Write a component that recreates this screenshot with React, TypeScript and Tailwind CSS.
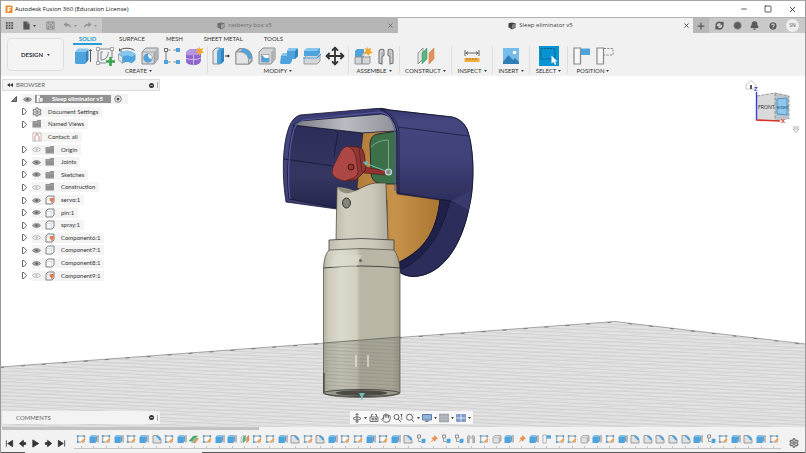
import React from 'react';
import { Bell, Clock, CircleHelp, Hand, Minus, Move, Plus, RefreshCw, Settings, Square, X } from 'lucide-react';

type IconProps = { className?: string };

const BLUE = '#4ea3dc';
const BLUE_DARK = '#3583bd';
const GREY = '#8a8d90';

const Svg: React.FC<IconProps & { children: React.ReactNode }> = ({ className = 'size-5', children }) => (
  <svg viewBox="0 0 20 20" className={`${className} shrink-0`} fill="none" aria-hidden="true">{children}</svg>
);

/* ---------- Ribbon icons ---------- */

const ExtrudeIcon: React.FC<IconProps> = ({ className }) => (
  <Svg className={className}>
    <path d="M2 6 5 2.500H15.500L13 6Z" fill="#86c5ee" />
    <path d="M2 6H13V17L12 18H3L2 17Z" fill={BLUE} />
    <path d="M13 6 15.500 3V14L13 17Z" fill={BLUE_DARK} />
    <path d="M17.500 4V16M16.300 5 17.500 3.500 18.700 5" stroke="#555" strokeWidth="1" />
  </Svg>
);

const SketchPlusIcon: React.FC<IconProps> = ({ className }) => (
  <Svg className={className}>
    <path d="M3 3H17V12M11 17H3V3" stroke={GREY} strokeWidth="1.200" />
    <path d="M6 14V6H8M6 14C11 14 13 11 13.500 6" stroke={GREY} strokeWidth="1.100" />
    <path d="M1.500 1.500h3v3h-3zM15.500 1.500h3v3h-3zM1.500 15.500h3v3h-3z" fill="#fff" stroke={GREY} strokeWidth=".8" />
    <path d="M15.500 11V20M11 15.500H20" stroke="#35a34a" strokeWidth="2.600" />
  </Svg>
);

const RevolveIcon: React.FC<IconProps> = ({ className }) => (
  <Svg className={className}>
    <path d="M1.500 8C6 3.500 14 3.500 18.500 8V14L14.500 17.500C12 15.500 8 15.500 5.500 17.500L1.500 14Z" fill={BLUE} />
    <path d="M1.500 8C6 3.500 14 3.500 18.500 8L15 11C12 9 8 9 5.500 11Z" fill="#86c5ee" />
    <path d="M1.500 8 5.500 11V17.500L1.500 14Z" fill="#dfe2e4" stroke={GREY} strokeWidth=".6" />
    <path d="M2 4.500C6 1.500 14 1.500 17.500 4.500M2.500 2.500V5H5" stroke="#555" strokeWidth="1" />
  </Svg>
);

const HoleIcon: React.FC<IconProps> = ({ className }) => (
  <Svg className={className}>
    <path d="M2 6 6 2H18V13L14 18H2Z" fill="#d4d7d9" stroke={GREY} />
    <path d="M14 6 18 2V13L14 18Z" fill="#aeb2b5" />
    <path d="M2 6H14V18" stroke={GREY} strokeWidth=".6" />
    <circle cx="8" cy="12" r="4.200" fill="#fff" stroke={GREY} strokeWidth=".8" />
    <path d="M8 7.800A4.200 4.200 0 1 0 12 13C9 13 8 11 8 7.800Z" fill={BLUE} />
  </Svg>
);

const PatternIcon: React.FC<IconProps> = ({ className }) => (
  <Svg className={className}>
    <path d="M6 4H8.500M11.500 4H14M6 16H8.500M11.500 16H14M4 6V14" stroke={GREY} strokeWidth="1.200" />
    <path d="M2.500 2.500h3v3h-3z" fill="#fff" stroke="#666" />
    <path d="M14 2h4v4h-4zM2 14h4v4H2zM14 14h4v4h-4z" fill={BLUE} />
  </Svg>
);

const FormIcon: React.FC<IconProps> = ({ className }) => (
  <Svg className={className}>
    <path d="M2 8C2 5 5 3 9 3S17 5 17 7V14C17 17 14 19 10 19S2 18 2 15Z" fill="#9066cd" />
    <path d="M2 8C2 5 5 3 9 3S17 5 17 7 14 9 10 9 2 10 2 8Z" fill="#b595e2" />
    <path d="M2 12.500C6 14 13 14 17 12M9.500 9V19" stroke="#e0d0f4" strokeWidth=".8" />
    <path d="M15 0 16 3 19 2 18 5 20 7 17 7 15.500 10 14.500 7 11.500 6.500 13.500 4.500 12.500 2 15 3Z" fill="#f0a72c" />
  </Svg>
);

const PressPullIcon: React.FC<IconProps> = ({ className }) => (
  <Svg className={className}>
    <path d="M2 5 5 2H9V18H2Z" fill="#e4e6e8" stroke={GREY} />
    <path d="M6 5 9 2H13V15L10 18H6Z" fill={BLUE} />
    <path d="M10 5 13 2V15L10 18Z" fill={BLUE_DARK} />
    <path d="M14 10H18M16.800 8.800 18 10 16.800 11.200" stroke="#333" strokeWidth="1.200" />
  </Svg>
);

const FilletIcon: React.FC<IconProps> = ({ className }) => (
  <Svg className={className}>
    <path d="M2 6 5.500 2.500H8C14 2.500 18 7 18 13V15L15 18H2Z" fill="#c3c7ca" stroke={GREY} strokeWidth="1.200" />
    <path d="M8.500 2.500C14 2.500 18 7 18 12.500L14.500 13C14 9 10.500 6 6 6Z" fill={BLUE} />
    <path d="M2 6H6C11 6 14.500 10 14.500 14V18H2Z" fill="#e2e4e6" stroke={GREY} strokeWidth=".8" />
  </Svg>
);

const ShellIcon: React.FC<IconProps> = ({ className }) => (
  <Svg className={className}>
    <path d="M2 6 6 2H18V13L14 18H2Z" fill="#d4d7d9" stroke={GREY} />
    <path d="M14 6 18 2V13L14 18Z" fill="#aeb2b5" />
    <path d="M4.500 8.500H12V16H4.500Z" fill="#fff" stroke={GREY} strokeWidth=".7" />
    <path d="M4.500 8.500 8 12V16H4.500ZM8 12H12V16H8Z" fill={BLUE} />
  </Svg>
);

const CombineIcon: React.FC<IconProps> = ({ className }) => (
  <Svg className={className}>
    <path d="M2 10 4 7H8V5L10 2H18L19 3V10L16 13H13V15L11 18H2L1 17Z" fill={BLUE} />
    <path d="M8 5 10 2H18L16 5ZM2 10 4 7H8V10Z" fill="#86c5ee" />
    <path d="M16 5 19 3V10L16 13Z" fill={BLUE_DARK} />
  </Svg>
);

const SplitIcon: React.FC<IconProps> = ({ className }) => (
  <Svg className={className}>
    <path d="M2 12 5 9H18V15L15 18H2Z" fill="#d4d7d9" stroke={GREY} strokeWidth=".8" />
    <path d="M2 5 5 2H18V7L15 10H2Z" fill={BLUE} />
    <path d="M2 5 5 2H18L15 5Z" fill="#86c5ee" />
    <path d="M1 12H15L19 8" stroke={BLUE} strokeWidth="1.200" />
  </Svg>
);

const MoveIcon: React.FC<IconProps> = ({ className = 'size-5' }) => (
  <Move className={`${className} text-[#333]`} strokeWidth={2.2} />
);

const NewComponentIcon: React.FC<IconProps> = ({ className }) => (
  <Svg className={className}>
    <path d="M2 5 4 3H11V11H2Z" fill={BLUE} />
    <path d="M2 11H9V18H2ZM9 11H16L17 10V17L16 18H9ZM9 11V7H15" fill="#d4d7d9" stroke={GREY} strokeWidth=".9" />
    <path d="M14 0 15 3 18 2 17.500 5 20 7 17 7.500 15 10 14 7.500 11 7 13 4.500 11.500 2 14 3Z" fill="#f0a72c" />
  </Svg>
);

const JointIcon: React.FC<IconProps> = ({ className }) => (
  <Svg className={className}>
    <path d="M3 17V6C3 3 8 2 8 5V9L6 11V18ZM17 17V6C17 3 12 2 12 5V9L14 11V18Z" fill="#cfd2d4" stroke="#777" strokeWidth="1.100" />
    <path d="M6 17V6M14 17V6" stroke="#999" strokeWidth=".7" />
  </Svg>
);

const PlaneIcon: React.FC<IconProps> = ({ className }) => (
  <Svg className={className}>
    <path d="M2 7 7 2V13L2 18Z" fill="#e3e5e6" stroke={GREY} strokeWidth=".9" />
    <path d="M6 7 11 2V13L6 18Z" fill="#58b57c" stroke="#3c9560" strokeWidth=".5" />
    <path d="M13 7 18 2V13L13 18Z" fill="#e6915d" stroke="#c97845" strokeWidth=".5" />
  </Svg>
);

const MeasureIcon: React.FC<IconProps> = ({ className }) => (
  <Svg className={className}>
    <path d="M3 4V10M17 4V10M3.500 7H16.500M6 5.500 4 7 6 8.500M14 5.500 16 7 14 8.500" stroke="#666" strokeWidth="1" />
    <path d="M2.500 12H17.500V16H2.500Z" fill="#f0ad3c" />
    <path d="M5 12V14M8 12V14M11 12V14M14 12V14" stroke="#9c681a" strokeWidth=".8" />
  </Svg>
);

const ImageIcon: React.FC<IconProps> = ({ className }) => (
  <Svg className={className}>
    <path d="M2 2H18V18H2Z" fill="#77bde9" />
    <path d="M2 16 7.500 9 12 14 14 12 18 16V18H2Z" fill="#2f7db5" />
    <circle cx="13.500" cy="6.500" r="1.800" fill="#fff" />
  </Svg>
);

const SelectIcon: React.FC<IconProps> = ({ className }) => (
  <Svg className={className}>
    <path d="M0 0H20V20H0Z" fill="#0894d3" />
    <path d="M2 2.500H16V13H2Z" stroke="#0d5b7d" strokeWidth="1" strokeDasharray="2 1" />
    <path d="M12.500 9.500V17.500L14.500 16 16 19 17.300 18.300 16 15.500H18.500Z" fill="#fff" />
  </Svg>
);

const CaptureIcon: React.FC<IconProps> = ({ className }) => (
  <Svg className={className}>
    <path d="M2 2H8.500V18H2Z" fill="#f7f7f7" stroke="#888" strokeWidth="1.200" />
    <path d="M9 2.500H18V9H9Z" fill={BLUE} />
  </Svg>
);

const RevertIcon: React.FC<IconProps> = ({ className }) => (
  <Svg className={className}>
    <path d="M2 2H8.500V18H2Z" fill="#f7f7f7" stroke="#888" strokeWidth="1.200" />
    <path d="M9 2.500H18V9H9" stroke="#888" strokeWidth="1" strokeDasharray="2 1.300" />
  </Svg>
);

/* ---------- Timeline icons ---------- */

const SmallExtrudeIcon: React.FC<IconProps> = ({ className }) => (
  <Svg className={className}>
    <path d="M1 6 4 2H15L13 6Z" fill="#7fbfea" />
    <path d="M1 6H13V18H1Z" fill={BLUE} />
    <path d="M13 6 15.500 3V14L13 18Z" fill={BLUE_DARK} />
    <path d="M18 2V17" stroke="#777" strokeWidth="1.800" />
  </Svg>
);

const SketchIcon: React.FC<IconProps> = ({ className }) => (
  <Svg className={className}>
    <path d="M3.500 4H16.500V16H3.500Z" fill="#fafafa" stroke="#7d8184" strokeWidth="1.700" />
    <path d="M1.500 2h4v4h-4zM14.500 2h4v4h-4zM1.500 14h4v4h-4z" fill="#6ba9d6" />
    <path d="M9 18 10.500 14 16.500 8 19.500 11 13 17Z" fill="#f0a04b" stroke="#fff" strokeWidth=".6" />
  </Svg>
);

const SmallFilletIcon: React.FC<IconProps> = ({ className }) => (
  <Svg className={className}>
    <path d="M2 3H8C14 3 18 8 18 13V18H2Z" fill="#dfe1e3" stroke="#85898c" strokeWidth="1.600" />
    <path d="M8.500 3C14 3 18 8 18 13L14 12C13 9 11 7 8.500 6Z" fill={BLUE} />
  </Svg>
);

const OffsetPlaneIcon: React.FC<IconProps> = ({ className }) => (
  <Svg className={className}>
    <path d="M6 18 13 8H20L13 18Z" fill="#e6915d" />
    <path d="M0 14 9 4H17L8 14Z" fill="#4aa869" stroke="#2f8a4e" strokeWidth=".8" />
    <path d="M3 17 12 7H17L8 17Z" fill="#7fca96" />
  </Svg>
);

const CopyIcon: React.FC<IconProps> = ({ className }) => (
  <Svg className={className}>
    <path d="M3 2H9V8H3Z" fill="#eee" stroke="#777" strokeWidth="1.600" />
    <path d="M5 9V15H10" stroke="#888" strokeWidth="1.600" />
    <path d="M11 11 13 9.500H19V16L17.500 18H11Z" fill={BLUE} />
  </Svg>
);

const PinIcon: React.FC<IconProps> = ({ className }) => (
  <Svg className={className}>
    <path d="M11 2 18 9 15 10 12 15 9 12.500 2 18 7.500 11 5 8 10 6Z" fill="#ec9350" />
  </Svg>
);

const BoxIcon: React.FC<IconProps> = ({ className }) => (
  <Svg className={className}>
    <path d="M2 7 6 3H18V13L14 18H3L2 17Z" fill="#e2e2e2" stroke="#888" strokeWidth="1.300" />
    <path d="M14 7 18 3V13L14 18Z" fill="#b4b4b4" />
    <path d="M2 7H14V18" stroke="#aaa" />
  </Svg>
);

/* ---------- Browser icons ---------- */

const EyeIcon: React.FC<{ hidden?: boolean }> = ({ hidden }) => (
  <Svg className="size-[9px]">
    <path d="M1 10C4 4.500 16 4.500 19 10 16 15.500 4 15.500 1 10Z" fill={hidden ? '#f8f8f8' : '#a9a9a9'} stroke={hidden ? '#a8a8a8' : '#777'} strokeWidth="1.800" />
    <circle cx="10" cy="10" r="3" fill={hidden ? '#c6c6c6' : '#666'} />
  </Svg>
);

const FolderIcon = () => (
  <Svg className="size-[10px]">
    <path d="M1 4H9L11 2H18V17H1Z" fill="#919191" />
    <path d="M1 6.500H18" stroke="#b8b8b8" />
  </Svg>
);

const ComponentIcon: React.FC<{ pinned?: boolean }> = ({ pinned }) => (
  <Svg className="size-[10px]">
    <path d="M2 6 6 2H18V14L14 18H2Z" fill="#f5f6f8" stroke="#777" strokeWidth="1.800" />
    <path d="M13 7H3M13 7V17M13 7 17 3" stroke="#c2c6ca" />
    {pinned && <path d="M10 6H18V10L16 12 14 19 12 13 9 11Z" fill="#e08052" />}
  </Svg>
);

const ContactIcon = () => (
  <Svg className="size-[10px]">
    <path d="M2 2H18V18H2Z" fill="#fff" stroke="#999" strokeWidth="1.200" />
    <path d="M6 17V9L8.500 6V3M14 17V9L11.500 6V3" stroke="#cf6464" strokeWidth="1.600" />
  </Svg>
);

const Caret: React.FC<IconProps> = ({ className = 'text-[#444]' }) => (
  <svg viewBox="0 0 6 4" className={`${className} h-[2px] w-[3px] shrink-0`} aria-hidden="true">
    <path d="M0 0H6L3 4Z" fill="currentColor" />
  </svg>
);

const RIBBON_TABS = ['SURFACE', 'MESH', 'SHEET METAL', 'TOOLS'];

const RIBBON_GROUPS: { label: string; width: string; icons: React.FC<IconProps>[] }[] = [
  { label: 'CREATE', width: 'w-[138px]', icons: [ExtrudeIcon, SketchPlusIcon, RevolveIcon, HoleIcon, PatternIcon, FormIcon] },
  { label: 'MODIFY', width: 'w-[141px]', icons: [PressPullIcon, FilletIcon, ShellIcon, CombineIcon, SplitIcon, MoveIcon] },
  { label: 'ASSEMBLE', width: 'w-[51px]', icons: [NewComponentIcon, JointIcon] },
  { label: 'CONSTRUCT', width: 'w-[52px]', icons: [PlaneIcon] },
  { label: 'INSPECT', width: 'w-[41px]', icons: [MeasureIcon] },
  { label: 'INSERT', width: 'w-[37px]', icons: [ImageIcon] },
  { label: 'SELECT', width: 'w-[38px]', icons: [SelectIcon] },
  { label: 'POSITION', width: 'w-[50px]', icons: [CaptureIcon, RevertIcon] },
];

type TreeRow = { label: string; icon: 'gear' | 'folder' | 'contact' | 'body' | 'pinned'; eye?: 'on' | 'off' };

const TREE: TreeRow[] = [
  { label: 'Document Settings', icon: 'gear' },
  { label: 'Named Views', icon: 'folder' },
  { label: 'Contact: all', icon: 'contact' },
  { label: 'Origin', icon: 'folder', eye: 'off' },
  { label: 'Joints', icon: 'folder', eye: 'on' },
  { label: 'Sketches', icon: 'folder', eye: 'on' },
  { label: 'Construction', icon: 'folder', eye: 'off' },
  { label: 'servo:1', icon: 'pinned', eye: 'on' },
  { label: 'pin:1', icon: 'body', eye: 'on' },
  { label: 'spray:1', icon: 'body', eye: 'on' },
  { label: 'Component6:1', icon: 'pinned', eye: 'off' },
  { label: 'Component7:1', icon: 'body', eye: 'on' },
  { label: 'Component8:1', icon: 'body', eye: 'on' },
  { label: 'Component9:1', icon: 'pinned', eye: 'off' },
];

// s sketch, e extrude, f fillet, o offset plane, m midplane, c copy, p pin, j joint, b body, k capture position
const FEATURES = 'sesesefseoseemssefsfessesefcpccjsbepekssbesefffffecsefes';

const FEATURE_ICONS: Record<string, [React.FC<IconProps>, string]> = {
  s: [SketchIcon, 'Sketch'],
  e: [SmallExtrudeIcon, 'Extrude'],
  f: [SmallFilletIcon, 'Fillet'],
  o: [OffsetPlaneIcon, 'Offset plane'],
  m: [PlaneIcon, 'Midplane'],
  c: [CopyIcon, 'Copy'],
  p: [PinIcon, 'Pin'],
  j: [JointIcon, 'Joint'],
  b: [BoxIcon, 'Body'],
  k: [CaptureIcon, 'Position'],
};

const TitleBar = () => (
  <header className="flex h-[17px] items-center border-t border-[#a6a6a6] bg-white pl-1 text-[#111]">
    <svg viewBox="0 0 16 18" className="mr-[2px] h-[9px] w-2" aria-hidden="true">
      <path d="M1 1H13L15 3V16H1Z" fill="#f08a2c" />
      <path d="M5 4H12V6.500H8V8.500H11V11H8V14H5Z" fill="#fff" />
    </svg>
    <h1 className="flex-1 whitespace-nowrap font-['Open_Sans',sans-serif] text-[6px]">Autodesk Fusion 360 (Education License)</h1>
    <div className="flex items-center gap-4 pr-2">
      <button aria-label="Minimize"><Minus size={8} strokeWidth={2} /></button>
      <button aria-label="Maximize"><Square size={8} strokeWidth={2} /></button>
      <button aria-label="Close"><X size={9} strokeWidth={2} /></button>
    </div>
  </header>
);

const TabCube: React.FC<IconProps> = ({ className }) => (
  <svg viewBox="0 0 18 18" className={`${className} size-2 shrink-0`} aria-hidden="true">
    <path d="M1 3 8 1 17 3V13L9 17 1 12Z" fill="currentColor" />
    <path d="M9 6 16 4V12L9 16Z" fill="#fff" opacity=".35" />
  </svg>
);

const DocumentBar = () => (
  <div className="flex h-4 items-stretch border-t border-[#b2b2b2] bg-[#c9c9c9] font-['Open_Sans',sans-serif] text-[6px] text-[#444]">
    <div className="flex w-[101px] shrink-0 items-center pl-1 text-[#555]">
      <button aria-label="Data panel" className="mr-2">
        <Svg className="size-[9px]"><path d="M2 2h4v4H2zM8 2h4v4H8zM14 2h4v4h-4zM2 8h4v4H2zM8 8h4v4H8zM14 8h4v4h-4zM2 14h4v4H2zM8 14h4v4H8zM14 14h4v4h-4z" fill="currentColor" /></Svg>
      </button>
      <button aria-label="File" className="mr-[10px] flex items-center gap-[2px]">
        <Svg className="size-[9px]"><path d="M3 1H12L17 6V19H3Z" fill="#555" /><path d="M12 1V6H17" stroke="#ccc" /></Svg>
        <Caret />
      </button>
      <button aria-label="Save" className="mr-2">
        <Svg className="size-[9px]"><path d="M2 2H18V18H2ZM6 2V7H14V2M5 18V11H15V18M7 14H13" stroke="#858585" strokeWidth="2" /></Svg>
      </button>
      <button aria-label="Undo" className="mr-[6px] flex items-center gap-[2px] text-[#929292]">
        <Svg className="size-[9px]"><path d="M1 8 8 2V6C14 6 18 9 18 16 15 12 12 10 8 10V14Z" fill="currentColor" /></Svg>
        <Caret className="text-[#929292]" />
      </button>
      <button aria-label="Redo" className="flex items-center gap-[2px] text-[#929292]">
        <Svg className="size-[9px]"><path d="M19 8 12 2V6C6 6 2 9 2 16 5 12 8 10 12 10V14Z" fill="currentColor" /></Svg>
        <Caret className="text-[#929292]" />
      </button>
    </div>
    <div className="flex flex-1 items-center bg-[#b6b6b6] pr-1 text-[#6d6d6d]">
      <button className="flex flex-1 items-center justify-center gap-[3px] whitespace-nowrap"><TabCube />rasberry box v3</button>
      <button aria-label="Close rasberry box v3"><X size={7} strokeWidth={3} /></button>
    </div>
    <div className="flex flex-1 items-center bg-[#f1f1f1] pr-[3px]">
      <button className="flex flex-1 items-center justify-center gap-[3px] whitespace-nowrap"><TabCube />Sleep eliminator v5</button>
      <button aria-label="Close Sleep eliminator v5"><X size={7} strokeWidth={3} /></button>
    </div>
    <div className="flex w-28 shrink-0 items-center text-[#5a5a5a]">
      <button aria-label="New tab" className="flex h-full w-4 items-center justify-center bg-[#b8b8b8]"><Plus size={10} strokeWidth={3} /></button>
      <div className="flex flex-1 items-center justify-between pl-[6px] pr-[6px]">
        <button aria-label="Extensions"><RefreshCw size={9} strokeWidth={4} /></button>
        <button aria-label="Job status"><Clock size={9} fill="#5a5a5a" stroke="#9a9a9a" strokeWidth={2} /></button>
        <button aria-label="Notifications"><Bell size={9} fill="#5a5a5a" strokeWidth={3} /></button>
        <button aria-label="Help"><CircleHelp size={10} fill="#5a5a5a" stroke="#dadada" strokeWidth={2.5} /></button>
        <button className="flex size-[13px] items-center justify-center rounded-full bg-[#eeeeee] text-[5px]">SN</button>
      </div>
    </div>
  </div>
);

const Ribbon = () => (
  <div className="flex h-[43px] bg-[#f1f1f1] pl-[6px] font-[Lato,sans-serif] text-[6px] leading-[7px] text-[#333]">
    <button className="my-[5px] flex w-[57px] shrink-0 items-center justify-center gap-1 rounded-sm border border-[#dedede] bg-[#f4f4f4] font-bold">
      DESIGN <Caret />
    </button>
    <div className="flex flex-col pl-[6px]">
      <nav className="flex h-3 items-end gap-[21px] pl-[3px]">
        <button className="-mr-1 w-[29px] border-b-2 border-[#2a9bd6] pb-px font-bold text-[#2a9bd6]">SOLID</button>
        {RIBBON_TABS.map(tab => (
          <button key={tab} className="whitespace-nowrap pb-[3px]">{tab}</button>
        ))}
      </nav>
      <div className="flex h-[29px] pt-px">
        {RIBBON_GROUPS.map(group => (
          <div key={group.label} className={`${group.width} flex shrink-0 flex-col justify-between border-r border-[#dedede] px-[2px] last:border-0`}>
            <div className="flex h-5 items-center justify-around">
              {group.icons.map((Icon, i) => (
                <button key={i} aria-label={`${group.label} tool ${i + 1}`}><Icon className="size-5" /></button>
              ))}
            </div>
            <button className="flex items-center justify-center gap-[2px] whitespace-nowrap">
              {group.label}<Caret />
            </button>
          </div>
        ))}
      </div>
    </div>
  </div>
);

const PanelDot = () => (
  <svg viewBox="0 0 12 12" className="size-[5px]" aria-hidden="true">
    <circle cx="6" cy="6" r="6" fill="#333" />
    <path d="M3 6H9" stroke="#fff" strokeWidth="1.500" />
  </svg>
);

const RowIcon: React.FC<{ icon: TreeRow['icon'] }> = ({ icon }) => {
  if (icon === 'gear') return <Settings size={10} strokeWidth={3} className="text-[#858585]" />;
  if (icon === 'folder') return <FolderIcon />;
  if (icon === 'contact') return <ContactIcon />;
  return <ComponentIcon pinned={icon === 'pinned'} />;
};

const BrowserPanel = () => (
  <section className="w-[158px] font-[Lato,sans-serif] text-[6px] leading-[8px] text-[#333]">
    <div className="mt-[3px] flex h-3 items-center border border-[#dcdcdc] bg-[#f3f3f3] pl-1 pr-px text-[#666]">
      <button aria-label="Collapse browser">
        <svg viewBox="0 0 12 8" className="h-1 w-[6px]"><path d="M6 0V8L0 4ZM12 0V8L6 4Z" fill="#333" /></svg>
      </button>
      <h2 className="flex-1 pl-[3px]">BROWSER</h2>
      <PanelDot />
      <span className="ml-[3px] h-[6px] w-px bg-[#aaa]" />
    </div>
    <div className="mt-[2px] flex h-[189px] flex-col items-start">
      <div className="flex flex-1 items-center pl-[9px]">
        <svg viewBox="0 0 12 12" className="mr-1 size-[6px]" aria-hidden="true"><path d="M11 1V11H1Z" fill="#888" stroke="#333" strokeWidth="1.500" /></svg>
        <div className="flex h-[10px] items-center gap-[3px] bg-[#f3f3f3] pl-[2px] pr-[6px]">
          <EyeIcon />
          <button className="flex h-2 items-center gap-2 whitespace-nowrap bg-[#929292] pl-px pr-2 font-bold text-white">
            <Svg className="size-2"><path d="M2 1H10V18H2Z" fill="#fff" /><path d="M8 9 11 6H18V15L16 18H8Z" fill="#eee" stroke="#666" strokeWidth="1.500" /></Svg>
            Sleep eliminator v5
          </button>
          <svg viewBox="0 0 16 16" className="size-2" aria-hidden="true">
            <circle cx="8" cy="8" r="6.500" fill="#fff" stroke="#555" strokeWidth="1.500" />
            <circle cx="8" cy="8" r="3" fill="#444" />
          </svg>
        </div>
      </div>
      {TREE.map(row => (
        <div key={row.label} className="flex flex-1 items-center pl-5">
          <span className="w-[10px]">
            {row.icon !== 'contact' && (
              <svg viewBox="0 0 10 14" className="h-[7px] w-[5px]" aria-hidden="true"><path d="M1 1H4L9 7 4 13H1Z" fill="#fff" stroke="#555" strokeWidth="1.800" /></svg>
            )}
          </span>
          <button className="flex h-[10px] items-center whitespace-nowrap bg-[#f4f4f4] pr-1">
            {row.eye && <span className="w-[13px]"><EyeIcon hidden={row.eye === 'off'} /></span>}
            <span className="w-4"><RowIcon icon={row.icon} /></span>
            {row.label}
          </button>
        </div>
      ))}
    </div>
  </section>
);

const ViewCube = () => (
  <svg viewBox="0 0 64 60" className="h-[60px] w-16" aria-label="View cube">
    <path d="M5 9 10 4.500 15 9V13H5Z" fill="#fff" stroke="#bbb" strokeWidth=".8" />
    <path d="M9 9H11V13H9Z" fill="#555" />
    <path d="M16 20 34 17 48 20V43L34 45 16 44Z" fill="#cfcfcf" />
    <path d="M16 20 34 17V45L16 44Z" fill="#dadada" />
    <path d="M34 17 48 20V43L34 45Z" fill="#bcc4ca" />
    <path d="M36 23 46 22V39L36 38Z" fill="#8fc6ec" stroke="#4d94c6" />
    <path d="M16 20 34 17 48 20V43M34 17V45" stroke="#777" strokeWidth=".7" strokeDasharray="3 1.500" fill="none" />
    <path d="M15.500 44V16" stroke="#3a3ad6" strokeWidth="1.400" />
    <path d="M15 44 39 45" stroke="#d9302a" strokeWidth="1.700" />
    <g fontFamily="Lato, sans-serif">
      <text x="17" y="33" fontSize="5" fill="#333">FRONT</text>
      <text x="36" y="33" fontSize="4" fill="#1f4c70">RIGHT</text>
      <text x="13" y="15" fontSize="6" fontWeight="bold" fill="#3a3ad6">Z</text>
      <text x="40" y="47" fontSize="6" fontWeight="bold" fill="#e0302a">X</text>
    </g>
    <path d="M52 51H58M52 53H58L55 56.500Z" stroke="#999" strokeWidth=".8" fill="#fff" />
  </svg>
);

const Model = () => (
  <svg viewBox="0 76 806 351" preserveAspectRatio="xMidYMid slice" className="absolute inset-0 size-full" aria-label="Sleep eliminator model">
    <defs>
      <clipPath id="floor"><path d="M0 367 615 321.500 806 344V427H0Z" /></clipPath>
      <clipPath id="sunk"><path d="M323 343 400 337V393C392 399 330 399 323 393Z" /></clipPath>
      <linearGradient id="hood" x1="0" y1="0" x2="0" y2="1">
        <stop offset="0" stopColor="#35366c" /><stop offset=".12" stopColor="#44467f" />
        <stop offset=".5" stopColor="#3f4178" /><stop offset="1" stopColor="#2b2c58" />
      </linearGradient>
      <linearGradient id="wall" x1="0" y1="0" x2="0" y2="1">
        <stop offset="0" stopColor="#2b2d58" /><stop offset=".6" stopColor="#353762" /><stop offset="1" stopColor="#25264c" />
      </linearGradient>
      <linearGradient id="body" x1="0" y1="0" x2="1" y2="0">
        <stop offset="0" stopColor="#b5b2a2" /><stop offset=".07" stopColor="#cfccbd" />
        <stop offset=".22" stopColor="#dbd9cb" /><stop offset=".43" stopColor="#d3d0c1" />
        <stop offset=".48" stopColor="#b9b5a5" /><stop offset=".9" stopColor="#bbb7a7" />
        <stop offset="1" stopColor="#a5a191" />
      </linearGradient>
      <linearGradient id="neck" x1="0" y1="0" x2="1" y2="0">
        <stop offset="0" stopColor="#bfbcad" /><stop offset=".2" stopColor="#d2cfc1" />
        <stop offset=".7" stopColor="#cbc7b9" /><stop offset="1" stopColor="#b0ac9d" />
      </linearGradient>
      <linearGradient id="disk" x1="0" y1="0" x2="1" y2="0">
        <stop offset="0" stopColor="#b07c38" /><stop offset=".45" stopColor="#c7924a" /><stop offset="1" stopColor="#a97732" />
      </linearGradient>
      <linearGradient id="ceiling" x1="0" y1="0" x2="1" y2="0">
        <stop offset="0" stopColor="#777a82" /><stop offset=".5" stopColor="#b9bcc1" /><stop offset="1" stopColor="#8e9198" />
      </linearGradient>
    </defs>

    {/* ground plane */}
    <g clipPath="url(#floor)">
      <path d="M0 320H806V427H0Z" fill="#e3e3e3" />
      {Array.from({ length: 44 }, (_, i) => (
        <path key={i} d={`M0 ${294 + i * 3.5} L806 ${334 + i * 3.5}`} stroke="#c9c9c9" strokeWidth=".7" />
      ))}
      {Array.from({ length: 34 }, (_, i) => (
        <path key={i} d={`M0 ${352 + i * 5} L806 ${292 + i * 5}`} stroke="#d3d3d3" strokeWidth=".6" />
      ))}
    </g>
    <path d="M0 367 615 321.500 806 344" fill="none" stroke="#888" strokeWidth=".7" />
    <path d="M0 367.500 615 322 806 344.500" fill="none" stroke="#666" strokeWidth=".8" strokeDasharray="4 17" />

    {/* hood */}
    <g stroke="#15162e" strokeWidth=".8" strokeLinejoin="round">
      <path d="M286 202C282 178 282 145 289 127Q293 117 300 115L376 108.500Q383 107.500 390 110L452 117Q462 119 467 129C474 147 475 184 469 208 461 248 441 276 413 276.500Q403 276 398 271L337 209Z" fill="url(#hood)" />
      <path d="M289 199C286 174 288 145 294 125L363 133 358 190 337 208Z" fill="url(#wall)" />
      <path d="M284 159 334 166M338 132 334 157" fill="none" />
      <path d="M293 125 300 121 382 114Q394 116 397 131L363 133 310 127Z" fill="url(#ceiling)" />
      <path d="M363 133 397 131V194L440 200C437 231 425 249 399 262L387 250V200L357 188Z" fill="url(#disk)" strokeWidth=".5" />
      <path d="M370 143Q371 135 378 134L397 131V184H380Q371 181 371 173Z" fill="#3c7049" />
      <path d="M397 193V132Q394 114 380 109L452 117Q462 119 467 129C474 147 475 184 469 208L450 201Z" fill="url(#hood)" />
      <path d="M450 201 469 208C461 248 441 276 413 276.500Q404 276 400 271V262C425 250 437 230 440 199.500Z" fill="#2c2d5a" />
      <path d="M440 199.500 450 201C440 240 422 260 400 270V262C425 250 437 230 440 199.500Z" fill="#20214a" />
      <path d="M451 201 471 190 469 210Z" fill="#383a6d" stroke="none" />
      <path d="M398 127 468 136" fill="none" strokeWidth=".7" />
      <path d="M290 199C287 174 289 146 294 129Q297 122 304 120L379 112Q392 113 395 132V191" fill="none" stroke="#5658a0" strokeWidth="1.200" />
      <path d="M399 193V132Q397 119 389 113" fill="none" strokeWidth=".6" />
    </g>

    {/* servo and linkage */}
    <path d="M364 167 387 171V175L364 173Z" fill="#93332f" stroke="#4b1716" strokeWidth=".6" />
    <path d="M348 146 358 147Q363 148 364 153L366 167Q366 171 361 175L356 180 345 181Z" fill="#8f3735" stroke="#4b1716" strokeWidth=".8" />
    <path d="M334 165 341 151Q346 143 352 149 355 152 356 158L358 172Q357 178 350 179L345 181Q334 179 332 173 332 169 334 165Z" fill="#ad4745" stroke="#4b1716" strokeWidth=".6" />
    <path d="M359 148 362 172" stroke="#4b1716" strokeWidth=".6" />
    <circle cx="351" cy="167" r="3" fill="#963735" stroke="#3b1010" strokeWidth=".9" />
    <path d="M365 163 388 172" stroke="#7cc9c4" strokeWidth=".9" />
    <path d="M388.500 140V168M371 147Q378 140 388 140" fill="none" stroke="#9fb8a5" strokeWidth=".7" />
    <path d="M363 162 368 161 366 166Z" fill="#66bcb5" />
    <circle cx="388.500" cy="172" r="3" fill="#8b8c8c" stroke="#b9e3e0" strokeWidth="1.200" />

    {/* spray bottle */}
    <path d="M337 187Q348 194 357 190 368 184 375 183H386L388 240H336Z" fill="url(#neck)" stroke="#3d3b34" strokeWidth=".7" />
    <path d="M337 187Q345 187 355 191 343 197 337 187Z" fill="#918e80" />
    <ellipse cx="346.500" cy="203" rx="4" ry="5" fill="#85847d" stroke="#3a3934" />
    <path d="M329 240Q361 237 394 240L394 253H329Z" fill="url(#neck)" stroke="#3d3b34" strokeWidth=".8" />
    <path d="M329 250Q361 247 394 250 399 256 400 270V393C392 399 330 399 323.500 393V268Q324 255 329 250Z" fill="url(#body)" stroke="#4b493f" strokeWidth=".7" />
    <path d="M323.500 268Q361 264 400 268" fill="none" stroke="#3d3b34" strokeWidth=".9" />
    <path d="M333 255Q331 263 332 267H356L362 255Z" fill="#dfddd0" opacity=".5" />
    <circle cx="360.500" cy="260.500" r="1.500" fill="#686657" />
    <g clipPath="url(#sunk)">
      <path d="M323 337H400V399H323Z" fill="#6d6c5e" opacity=".25" />
      {Array.from({ length: 20 }, (_, i) => (
        <path key={i} d={`M323 ${336 + i * 3.5} L400 ${340 + i * 3.5}`} stroke="#77756a" strokeWidth=".6" opacity=".4" />
      ))}
    </g>
    <path d="M323.500 343 400 337" stroke="#66645a" strokeWidth=".8" />
    <path d="M356 355V367M368 355V367" stroke="#ecebe4" strokeWidth="1.200" />
    <ellipse cx="361.500" cy="393" rx="38" ry="3.500" fill="#9a998e" stroke="#33322d" strokeWidth=".8" />
    <ellipse cx="361.500" cy="393" rx="26" ry="2.800" fill="#4b4a46" />
    <path d="M324 373V392" stroke="#33322d" />
    <path d="M359 393H365L363 396 362 401 360.500 396Z" fill="#6fbcb6" />
  </svg>
);

const NAV_ITEMS: { label: string; caret?: boolean; art: React.ReactNode }[] = [
  { label: 'Orbit', caret: true, art: <path d="M10 1V19M2 11C6 7 14 7 18 11 14 15 6 15 2 11M7 4 10 1 13 4M7 16 10 19 13 16" stroke="#555" strokeWidth="1.800" /> },
  { label: 'Look at', art: <path d="M2 8H18V17H2ZM5 8V3H8M15 8V3H12M6 11V14H9V11ZM12 11V14H15V11Z" stroke="#666" strokeWidth="1.800" /> },
  { label: 'Pan', art: null },
  { label: 'Zoom', art: <path d="M12 8A5 5 0 1 1 2 8 5 5 0 0 1 12 8M10 12 16 18M17 2V9M15 4 17 2 19 4M15 12H19" stroke="#555" strokeWidth="1.800" /> },
  { label: 'Fit', caret: true, art: <><path d="M2 2H17V14" stroke="#aaa" strokeDasharray="3 2" /><path d="M15 8.500A6 6 0 1 1 3 8.500 6 6 0 0 1 15 8.500M13 13 18 18" stroke="#555" strokeWidth="1.800" /></> },
  { label: 'Display', caret: true, art: <><path d="M1 3H19V14H1Z" fill="#8fb4dc" stroke="#59779b" strokeWidth="1.800" /><path d="M7 15H13V18H6V16Z" fill="#6d7f95" /></> },
  { label: 'Grid', caret: true, art: <><path d="M1 2H19V18H1Z" fill="#a8aeb5" stroke="#80858b" /><path d="M1 7H19M1 12H19M7 2V18M13 2V18" stroke="#bec3c9" /></> },
  { label: 'Viewports', caret: true, art: <><path d="M1 3H19V17H1Z" fill="#7d9ccd" stroke="#58759f" /><path d="M10 3V17M1 10H19" stroke="#e2eaf5" strokeWidth="2" /></> },
];

const Viewport = () => (
  <main className="relative flex flex-1 flex-col overflow-hidden bg-white">
    <Model />
    <div className="relative flex flex-1 items-start justify-between pl-px">
      <BrowserPanel />
      <ViewCube />
    </div>
    <div className="relative mb-[3px] flex items-center pl-px">
      <section className="flex h-[13px] w-[158px] items-center bg-[#f3f3f3] pl-[14px] pr-[2px] font-[Lato,sans-serif] text-[6px] text-[#666]">
        <h2 className="flex-1">COMMENTS</h2>
        <PanelDot />
        <span className="ml-[3px] h-[6px] w-px bg-[#aaa]" />
      </section>
      <div className="flex flex-1 justify-center pr-[142px]">
        <div className="flex h-[13px] items-center gap-[2px] bg-[#f7f7f7] px-[2px]">
          {NAV_ITEMS.map(item => (
            <button key={item.label} aria-label={item.label} className="flex items-center gap-[2px]">
              {item.art ? <Svg className="size-[10px]">{item.art}</Svg> : <Hand size={10} className="text-[#555]" />}
              {item.caret && <Caret />}
            </button>
          ))}
        </div>
      </div>
    </div>
  </main>
);

const PLAYBACK: [string, string][] = [
  ['Go to start', 'M3 3V17M17 3 6 10 17 17Z'],
  ['Step back', 'M12 3 3 10 12 17ZM13 8H17V12H13Z'],
  ['Play', 'M4 2 17 10 4 18Z'],
  ['Step forward', 'M8 3 17 10 8 17ZM3 8H7V12H3Z'],
  ['Go to end', 'M17 3V17M3 3 14 10 3 17Z'],
];

const Timeline = () => (
  <footer className="bg-[#f2f2f2]">
    <div className="ml-px h-[3px] w-[32%] bg-[#c3c3c3]" />
    <div className="flex h-[22px] items-center pl-1 pr-[6px]">
      <div className="mt-[5px] flex w-[61px] shrink-0 justify-between">
        {PLAYBACK.map(([label, d]) => (
          <button key={label} aria-label={label}>
            <Svg className="size-[9px]"><path d={d} fill="#333" stroke="#333" strokeWidth="1.800" /></Svg>
          </button>
        ))}
      </div>
      <div className="ml-[10px] flex flex-1 justify-between">
        {FEATURES.split('').map((key, i) => {
          const [Icon, label] = FEATURE_ICONS[key];
          return (
            <button key={i} aria-label={label} className="flex w-[10px] flex-col items-center">
              <Icon className="size-[10px]" />
              <span className="mt-[2px] h-[2px] w-px bg-[#c4c4c4]" />
              <span className="h-px w-[14px] bg-[#c4c4c4]" />
            </button>
          );
        })}
      </div>
      <button aria-label="Timeline settings" className="ml-[10px] mt-1"><Settings size={10} strokeWidth={3.5} className="text-[#777]" /></button>
    </div>
    <div className="flex h-px bg-[#555]"><span className="ml-[3%] w-[22%] bg-[#eeeeee]" /></div>
  </footer>
);

const App: React.FC = () => (
  <div className="flex min-h-screen flex-col overflow-hidden border-x border-[#9a9a9a] bg-white">
    <TitleBar />
    <DocumentBar />
    <Ribbon />
    <Viewport />
    <Timeline />
  </div>
);

export default App;
